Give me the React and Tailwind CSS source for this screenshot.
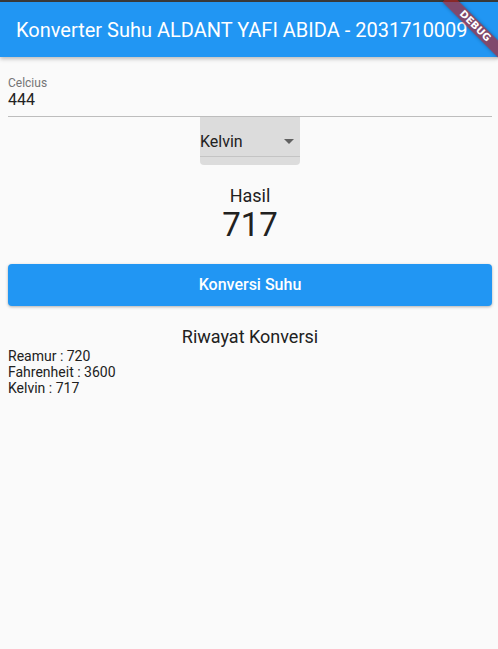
import React from 'react';

const history = ['Reamur : 720', 'Fahrenheit : 3600', 'Kelvin : 717'];

const App = () => {
  return (
    <div className="relative w-[498px] h-[649px] overflow-hidden bg-[#fafafa] font-['Roboto',sans-serif]">
      {/* App bar */}
      <div className="h-[2px] bg-[#3a3a3a]" />
      <div className="h-[55px] bg-[#2196f3] flex items-center pl-4 shadow-[0_2px_4px_rgba(0,0,0,0.25)] relative z-10">
        <h1 className="text-white text-[20px] leading-none">
          Konverter Suhu ALDANT YAFI ABIDA - 2031710009
        </h1>
      </div>

      {/* Body */}
      <div className="pl-2 pr-[6px] flex flex-col">
        {/* Input */}
        <div className="pt-[19px] border-b border-[#bdbdbd] pb-[7px]">
          <p className="text-[12px] leading-[14px] text-[#757575]">Celcius</p>
          <p className="text-[16px] leading-[19px] text-[#212121]">444</p>
        </div>

        {/* Dropdown */}
        <div className="flex justify-center">
          <div className="w-[100px] h-[48px] bg-[#dcdcdc] rounded-b-[4px] flex flex-col">
            <div className="flex-1 flex items-center justify-between pr-[6px] pt-[10px]">
              <span className="text-[16px] text-[#212121]">Kelvin</span>
              <svg width="10" height="5" viewBox="0 0 10 5">
                <path d="M0 0 L5 5 L10 0 Z" fill="#616161" />
              </svg>
            </div>
            <div className="h-[1px] bg-[#c4c4c4] mb-[8px]" />
          </div>
        </div>

        {/* Result */}
        <div className="flex flex-col items-center mt-[20px]">
          <p className="text-[18px] leading-[22px] text-[#212121]">Hasil</p>
          <p className="text-[33px] leading-[36px] text-[#212121]">717</p>
        </div>

        {/* Button */}
        <button className="mt-[21px] h-[42px] w-full rounded-[4px] bg-[#2196f3] text-white text-[16px] font-medium shadow-[0_1px_3px_rgba(0,0,0,0.3)]">
          Konversi Suhu
        </button>

        {/* History */}
        <div className="mt-[20px] flex flex-col">
          <p className="text-center text-[18px] leading-[22px] text-[#212121]">Riwayat Konversi</p>
          {history.map((h) => (
            <p key={h} className="text-[14px] leading-[16px] text-[#212121]">{h}</p>
          ))}
        </div>
      </div>

      {/* Debug banner */}
      <div className="absolute top-0 right-0 w-[60px] h-[60px] overflow-hidden z-20 pointer-events-none">
        <div className="absolute top-[20px] left-[-3px] w-[80px] h-[12px] bg-[rgba(183,28,28,0.63)] rotate-45 flex items-center justify-center shadow-[0_0_4px_rgba(0,0,0,0.3)]">
          <span className="text-white text-[10px] font-bold leading-none font-['DejaVu_Sans',sans-serif]">DEBUG</span>
        </div>
      </div>
    </div>
  );
};

export default App;
